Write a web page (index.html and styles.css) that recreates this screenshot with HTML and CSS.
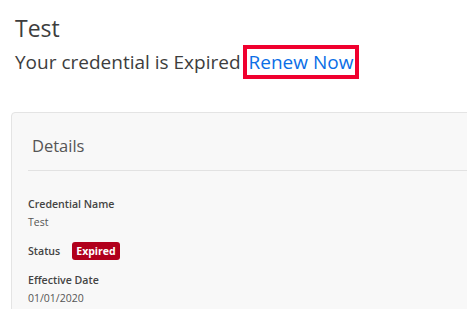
FILE: index.html
```html
<!DOCTYPE html>
<html>
<head>
<meta charset="utf-8">
<link rel="stylesheet" href="styles.css">
</head>
<body>
<div class="page">
  <h1 class="title">Test</h1>
  <p class="status-line">Your credential is Expired<a class="renew" href="#">Renew Now</a></p>
  <section class="card">
    <h2 class="card-title">Details</h2>
    <div class="card-body">
      <div class="field">
        <div class="label">Credential Name</div>
        <div class="value">Test</div>
      </div>
      <div class="field field-inline">
        <div class="label">Status</div>
        <span class="badge">Expired</span>
      </div>
      <div class="field">
        <div class="label">Effective Date</div>
        <div class="value">01/01/2020</div>
      </div>
    </div>
  </section>
</div>
</body>
</html>
```

FILE: styles.css
```css
html, body {
  margin: 0;
  padding: 0;
  background: #ffffff;
}
body {
  font-family: "Open Sans", "Noto Sans", sans-serif;
  color: #3b3b3b;
  overflow: hidden;
}
.page {
  padding: 12px 0 0 11px;
}
.title {
  margin: 0 0 0 4px;
  font-size: 23px;
  font-weight: 400;
  line-height: 32px;
  color: #3d3d3d;
}
.status-line {
  margin: 1px 0 0 4px;
  font-size: 19px;
  line-height: 35px;
  color: #3d3d3d;
  white-space: nowrap;
}
.renew {
  display: inline-block;
  margin-left: 2px;
  padding: 0 2px;
  border: 4px solid #f0002e;
  color: #0b6ee6;
  text-decoration: none;
  line-height: normal;
}
.card {
  margin-top: 32px;
  width: 520px;
  background: #f8f8f8;
  border: 1px solid #e4e4e4;
  border-radius: 4px;
  padding-left: 16px;
}
.card-title {
  margin: 0;
  padding: 21px 0 0 4px;
  height: 36px;
  font-size: 16.5px;
  font-weight: 400;
  line-height: 24px;
  color: #555555;
  border-bottom: 1px solid #e2e2e2;
}
.card-body {
  padding-top: 25px;
}
.field {
  margin-bottom: 12px;
}
.field + .field-inline + .field {
  margin-top: 1px;
}
.label {
  font-size: 10.6px;
  font-weight: 600;
  line-height: 16px;
  color: #444444;
}
.value {
  font-size: 10.5px;
  line-height: 16px;
  margin-top: 2px;
  color: #555555;
}
.field-inline {
  display: flex;
  align-items: center;
  gap: 12px;
}
.badge {
  display: inline-block;
  background: #b1001c;
  color: #ffffff;
  font-size: 10.5px;
  font-weight: 700;
  line-height: 18px;
  padding: 0 4px;
  border-radius: 3px;
}
```
